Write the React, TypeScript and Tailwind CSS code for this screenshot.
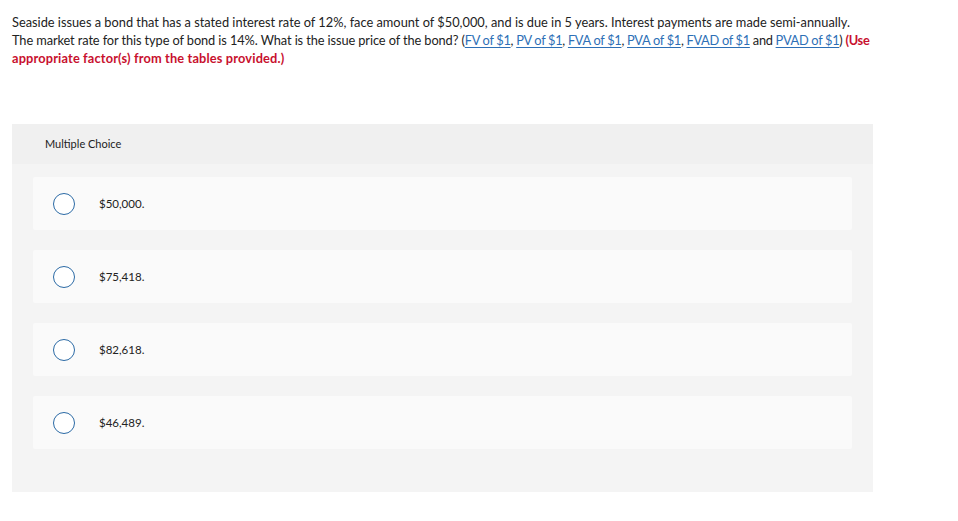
import React from "react";

const links = ["FV of $1", "PV of $1", "FVA of $1", "PVA of $1", "FVAD of $1"];
const choices = ["$50,000.", "$75,418.", "$82,618.", "$46,489."];

function Radio() {
  return <span className="block shrink-0 w-[22px] h-[22px] rounded-full border-[1.5px] border-[#2b6aa5] bg-white" />;
}

export default function App() {
  return (
    <div className="min-h-screen bg-white px-3 pt-[13px] font-['Lato',sans-serif] text-[#222]">
      <div className="w-[861px]">
        <p className="text-[12.8px] leading-[18px] whitespace-nowrap">
          Seaside issues a bond that has a stated interest rate of 12%, face amount of $50,000, and is due in 5 years.
          Interest payments are made semi-annually.
          <br />
          <span className="tracking-[-0.1px]">The market rate for this type of bond is 14%. What is the issue price of the bond? (</span>
          <span className="tracking-[-0.3px]">
            {links.map((l, i) => (
              <React.Fragment key={l}>
                <a className="text-[#2d6fb6] underline underline-offset-2">{l}</a>
                {i < links.length - 1 ? ", " : " "}
              </React.Fragment>
            ))}
            and <a className="text-[#2d6fb6] underline underline-offset-2">PVAD of $1</a>){" "}
            <span className="font-bold text-[#c8102e]">(Use</span>
          </span>
          <br />
          <span className="font-bold text-[#c8102e] tracking-[0.15px]">appropriate factor(s) from the tables provided.)</span>
        </p>

        <div className="mt-[57px] bg-[#f4f4f4]">
          <div className="h-10 bg-[#f0f0f0] px-[33px] flex items-center text-[11px]">Multiple Choice</div>
          <div className="px-[21px] pt-[13px] pb-[43px] flex flex-col gap-5">
            {choices.map((c) => (
              <div key={c} className="h-[53px] bg-[#fafafa] rounded-[2px] flex items-center pl-5">
                <Radio />
                <span className="ml-6 text-[11.5px]">{c}</span>
              </div>
            ))}
          </div>
        </div>
      </div>
    </div>
  );
}
